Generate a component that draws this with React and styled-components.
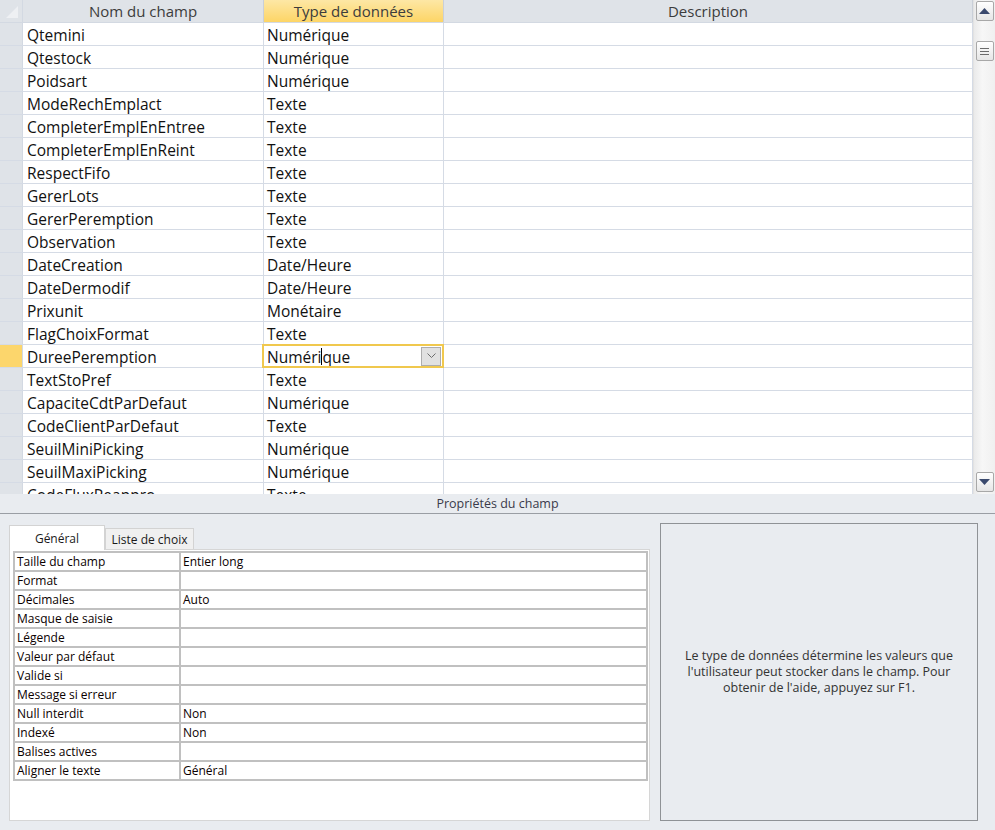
import styled, { createGlobalStyle } from 'styled-components';

const GlobalStyle = createGlobalStyle`
  html, body {
    margin: 0;
    padding: 0;
    background: #e9ecf0;
  }
  * {
    box-sizing: border-box;
  }
`;

const fields = [
  ['Qtemini', 'Numérique'],
  ['Qtestock', 'Numérique'],
  ['Poidsart', 'Numérique'],
  ['ModeRechEmplact', 'Texte'],
  ['CompleterEmplEnEntree', 'Texte'],
  ['CompleterEmplEnReint', 'Texte'],
  ['RespectFifo', 'Texte'],
  ['GererLots', 'Texte'],
  ['GererPeremption', 'Texte'],
  ['Observation', 'Texte'],
  ['DateCreation', 'Date/Heure'],
  ['DateDermodif', 'Date/Heure'],
  ['Prixunit', 'Monétaire'],
  ['FlagChoixFormat', 'Texte'],
  ['DureePeremption', 'Numérique', true],
  ['TextStoPref', 'Texte'],
  ['CapaciteCdtParDefaut', 'Numérique'],
  ['CodeClientParDefaut', 'Texte'],
  ['SeuilMiniPicking', 'Numérique'],
  ['SeuilMaxiPicking', 'Numérique'],
  ['CodeFluxReappro', 'Texte'],
];

const props = [
  ['Taille du champ', 'Entier long'],
  ['Format', ''],
  ['Décimales', 'Auto'],
  ['Masque de saisie', ''],
  ['Légende', ''],
  ['Valeur par défaut', ''],
  ['Valide si', ''],
  ['Message si erreur', ''],
  ['Null interdit', 'Non'],
  ['Indexé', 'Non'],
  ['Balises actives', ''],
  ['Aligner le texte', 'Général'],
];

function App() {
  return (
    <Page>
      <GlobalStyle />
      <GridArea>
        <Grid>
          <HeaderRow>
            <Corner>
              <svg width="14" height="14" viewBox="0 0 14 14">
                <polygon points="13,1 13,13 1,13" fill="#eef0f3" />
              </svg>
            </Corner>
            <HeadCell $w={241}>Nom du champ</HeadCell>
            <HeadCell $w={180} $active>Type de données</HeadCell>
            <HeadCell $grow>Description</HeadCell>
          </HeaderRow>
          <Rows>
            {fields.map(([name, type, selected]) => (
              <Row key={name}>
                <Selector $selected={selected} />
                <Cell $w={241} $pad={4}>{name}</Cell>
                {selected ? (
                  <EditCell $w={180}>
                    <EditText>
                      Numéri<Caret />que
                    </EditText>
                    <DropButton>
                      <svg width="9" height="6" viewBox="0 0 9 6">
                        <polyline points="0.5,0.5 4.5,4.5 8.5,0.5" fill="none" stroke="#6d6d6d" strokeWidth="1" />
                      </svg>
                    </DropButton>
                  </EditCell>
                ) : (
                  <Cell $w={180}>{type}</Cell>
                )}
                <Cell $grow />
              </Row>
            ))}
          </Rows>
        </Grid>
        <ScrollBar>
          <ScrollButton>
            <svg width="11" height="6" viewBox="0 0 11 6">
              <polygon points="5.5,0 11,6 0,6" fill="#3b4a6e" />
            </svg>
          </ScrollButton>
          <Thumb>
            <svg width="9" height="7" viewBox="0 0 9 7">
              <rect x="0" y="0" width="9" height="1" fill="#6b6b6b" />
              <rect x="0" y="3" width="9" height="1" fill="#6b6b6b" />
              <rect x="0" y="6" width="9" height="1" fill="#6b6b6b" />
            </svg>
          </Thumb>
          <Track />
          <ScrollButton>
            <svg width="11" height="6" viewBox="0 0 11 6">
              <polygon points="0,0 11,0 5.5,6" fill="#3b4a6e" />
            </svg>
          </ScrollButton>
        </ScrollBar>
      </GridArea>

      <PropsBar>Propriétés du champ</PropsBar>

      <Bottom>
        <LeftPane>
          <Tabs>
            <Tab $active>Général</Tab>
            <Tab>Liste de choix</Tab>
          </Tabs>
          <TabPanel>
            <PropTable>
              <tbody>
                {props.map(([label, value]) => (
                  <tr key={label}>
                    <PropLabel>{label}</PropLabel>
                    <PropValue>{value}</PropValue>
                  </tr>
                ))}
              </tbody>
            </PropTable>
          </TabPanel>
        </LeftPane>
        <HelpBox>
          <HelpText>
            Le type de données détermine les valeurs que<br />
            l'utilisateur peut stocker dans le champ. Pour<br />
            obtenir de l'aide, appuyez sur F1.
          </HelpText>
        </HelpBox>
      </Bottom>
    </Page>
  );
}

const Page = styled.div`
  width: 995px;
  height: 830px;
  display: flex;
  flex-direction: column;
  background: #e9ecf0;
  font-family: "Open Sans", "Noto Sans", sans-serif;
  overflow: hidden;
`;

const GridArea = styled.div`
  height: 494px;
  display: flex;
  background: #fff;
  flex-shrink: 0;
`;

const Grid = styled.div`
  flex: 1;
  display: flex;
  flex-direction: column;
  overflow: hidden;
`;

const HeaderRow = styled.div`
  height: 23px;
  display: flex;
  flex-shrink: 0;
  background: #dfe3e8;
  border-bottom: 1px solid #d3d9e2;
`;

const Corner = styled.div`
  width: 23px;
  flex-shrink: 0;
  display: flex;
  align-items: flex-end;
  justify-content: flex-end;
  padding: 0 3px 3px 0;
  border-right: 1px solid #d3d9e2;
`;

const HeadCell = styled.div`
  width: ${({ $w }) => ($w ? `${$w}px` : 'auto')};
  flex: ${({ $grow }) => ($grow ? 1 : '0 0 auto')};
  display: flex;
  align-items: center;
  justify-content: center;
  font-size: 15px;
  color: #3c3c3c;
  border-right: 1px solid #c9cfd8;
  background: ${({ $active }) =>
    $active ? 'linear-gradient(#fde7a5, #fdd566)' : 'transparent'};
`;

const Rows = styled.div`
  flex: 1;
  overflow: hidden;
`;

const Row = styled.div`
  height: 23px;
  display: flex;
  border-bottom: 1px solid #d5dbe5;
`;

const Selector = styled.div`
  width: 23px;
  flex-shrink: 0;
  background: ${({ $selected }) => ($selected ? '#fcd66c' : '#dfe3e8')};
  border-right: 1px solid #d3d9e2;
`;

const Cell = styled.div`
  width: ${({ $w }) => ($w ? `${$w}px` : 'auto')};
  flex: ${({ $grow }) => ($grow ? 1 : '0 0 auto')};
  display: flex;
  align-items: center;
  padding: 1px 0 0 ${({ $pad }) => $pad || 3}px;
  font-size: 15.5px;
  color: #111;
  white-space: nowrap;
  border-right: 1px solid #d5dbe5;
`;

const EditCell = styled(Cell)`
  position: relative;
  justify-content: space-between;
  padding-right: 2px;
  padding-top: 0;

  &::after {
    content: '';
    position: absolute;
    left: -2px;
    top: -1px;
    right: -1px;
    bottom: -1px;
    border: 2px solid #f0c84e;
    pointer-events: none;
  }
`;

const EditText = styled.span`
  display: inline-flex;
  align-items: center;
  padding-top: 1px;
`;

const Caret = styled.span`
  display: inline-block;
  width: 1px;
  height: 17px;
  background: #000;
`;

const DropButton = styled.div`
  width: 20px;
  height: 19px;
  display: flex;
  align-items: center;
  justify-content: center;
  background: #e1e1e1;
  border: 1px solid #adadad;
`;

const ScrollBar = styled.div`
  width: 22px;
  flex-shrink: 0;
  display: flex;
  flex-direction: column;
  align-items: center;
  padding: 1px 0 2px;
  background: linear-gradient(90deg, #eaeaea, #f7f7f7 40%, #f0f0f0);
  border-left: 1px solid #e2e2e2;
`;

const ScrollButton = styled.div`
  width: 18px;
  height: 20px;
  display: flex;
  align-items: center;
  justify-content: center;
  border: 1px solid #a8a8a8;
  border-radius: 2px;
  background: linear-gradient(#ffffff, #e6e6e6);
`;

const Thumb = styled(ScrollButton)`
  margin-top: 20px;
`;

const Track = styled.div`
  flex: 1;
`;

const PropsBar = styled.div`
  height: 20px;
  flex-shrink: 0;
  display: flex;
  align-items: center;
  justify-content: center;
  font-size: 12.5px;
  color: #3a3a4a;
  border-bottom: 1px solid #9a9ea4;
`;

const Bottom = styled.div`
  flex: 1;
  display: flex;
  gap: 10px;
  padding: 9px 17px 9px 9px;
`;

const LeftPane = styled.div`
  width: 641px;
  display: flex;
  flex-direction: column;
  padding-top: 2px;
`;

const Tabs = styled.div`
  display: flex;
  align-items: flex-end;
  height: 24px;
`;

const Tab = styled.div`
  height: ${({ $active }) => ($active ? '25px' : '21px')};
  width: ${({ $active }) => ($active ? '96px' : '89px')};
  display: flex;
  align-items: center;
  justify-content: center;
  font-size: 12px;
  color: #1a1a1a;
  background: ${({ $active }) => ($active ? '#ffffff' : '#f0f0f0')};
  border: 1px solid #d3d3d3;
  border-bottom: none;
  margin-bottom: ${({ $active }) => ($active ? '-1px' : '0')};
  position: relative;
  z-index: ${({ $active }) => ($active ? 1 : 0)};
`;

const TabPanel = styled.div`
  flex: 1;
  background: #fff;
  border: 1px solid #d6d6d6;
  padding: 1px 2px 0 3px;
`;

const PropTable = styled.table`
  width: 635px;
  border-collapse: separate;
  border-spacing: 0;
  border: 1px solid #c0c0c0;
  font-size: 12px;
  color: #0a0000;
`;

const PropLabel = styled.td`
  width: 166px;
  height: 19px;
  padding: 0 2px;
  border: 1px solid #c0c0c0;
  white-space: nowrap;
`;

const PropValue = styled(PropLabel)`
  width: auto;
`;

const HelpBox = styled.div`
  flex: 1;
  display: flex;
  align-items: center;
  justify-content: center;
  border: 1px solid #8f9296;
`;

const HelpText = styled.p`
  margin: 0;
  text-align: center;
  font-size: 12.5px;
  line-height: 16px;
  color: #333;
`;

export default App;
